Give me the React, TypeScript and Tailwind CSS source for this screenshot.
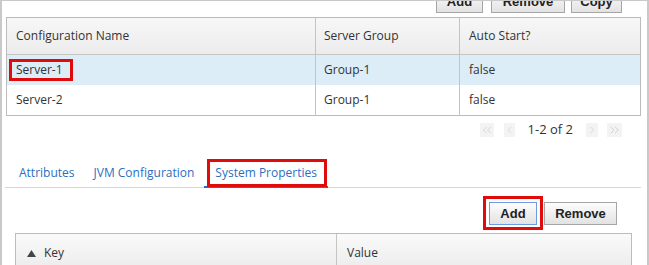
import { ChevronLeft, ChevronRight, ChevronsLeft, ChevronsRight } from "lucide-react"

const Btn = ({ label, focused, className }: { label: string; focused?: boolean; className?: string }) => {
    return (
        <div
            className={`h-[23px] flex items-center justify-center border bg-gradient-to-b from-[#fdfdfd] to-[#e2e2e2] font-['Liberation_Sans',Arial,sans-serif] font-bold text-[13px] text-[#222] ${focused ? "border-[#6d9ce4]" : "border-[#a6a6a6]"} ${className ?? ""}`}
        >
            {label}
        </div>
    )
}

const PageBox = ({ children, className }: { children: React.ReactNode; className?: string }) => {
    return (
        <div className={`h-[14px] flex items-center justify-center bg-[#f3f3f3] text-[#bdbdbd] ${className ?? ""}`}>
            {children}
        </div>
    )
}

const rows = [
    { name: "Server-1", group: "Group-1", auto: "false", selected: true },
    { name: "Server-2", group: "Group-1", auto: "false", selected: false },
]

const App = () => {
    return (
        <div className="w-[649px] h-[265px] overflow-hidden bg-white border-t border-x-2 border-[#c9c9c9] pl-1 pr-[6px] font-['Open_Sans',sans-serif] text-[12px] text-[#333]">
            {/* top actions, mostly scrolled out of view */}
            <div className="flex justify-end mt-[-11px] pr-[19px]">
                <Btn label="Add" className="w-[47px]" />
                <Btn label="Remove" className="w-[74px] ml-[8px]" />
                <Btn label="Copy" className="w-[51px] ml-[6px]" />
            </div>

            {/* configurations table */}
            <div className="mt-[4px] border border-[#bcbcbc]">
                <div className="grid grid-cols-[308px_144px_1fr] h-[37px] border-b border-[#c4c4c4] bg-gradient-to-b from-[#f7f7f7] to-[#ececec]">
                    <div className="flex items-center pl-[9px]">Configuration Name</div>
                    <div className="flex items-center pl-[8px] border-l border-[#c4c4c4]">Server Group</div>
                    <div className="flex items-center pl-[9px] border-l border-[#c4c4c4]">Auto Start?</div>
                </div>
                {rows.map((r) => (
                    <div key={r.name} className={`grid grid-cols-[308px_144px_1fr] h-[30px] ${r.selected ? "bg-[#dcedf8]" : "bg-white"}`}>
                        <div className="relative flex items-center pl-[9px]">
                            {r.name}
                            {r.selected && <div className="absolute left-[2px] top-[4px] w-[64px] h-[22px] border-[3px] border-[#e00b0b]" />}
                        </div>
                        <div className="flex items-center pl-[8px] border-l border-[#c4c4c4]">{r.group}</div>
                        <div className="flex items-center pl-[9px] border-l border-[#c4c4c4]">{r.auto}</div>
                    </div>
                ))}
            </div>

            {/* pager */}
            <div className="flex justify-end items-center h-[28px] pr-[19px] text-[13px]">
                <PageBox className="w-[14px]">
                    <ChevronsLeft size={16} strokeWidth={1} />
                </PageBox>
                <PageBox className="w-[11px] ml-[10px]">
                    <ChevronLeft size={16} strokeWidth={1} />
                </PageBox>
                <span className="ml-[13px] text-[#333]">1-2 of 2</span>
                <PageBox className="w-[12px] ml-[13px]">
                    <ChevronRight size={16} strokeWidth={1} />
                </PageBox>
                <PageBox className="w-[15px] ml-[9px]">
                    <ChevronsRight size={16} strokeWidth={1} />
                </PageBox>
            </div>

            {/* tabs */}
            <div className="flex items-end gap-[1px] mt-[14px] -ml-px pl-[5px] h-[30px] border-b border-[#d6d6d6] text-[#2a6fc2]">
                <div className="h-[29px] flex items-center px-[9px]">Attributes</div>
                <div className="h-[29px] flex items-center px-[9px]">JVM Configuration</div>
                <div className="relative h-[29px] flex items-center px-[11px] border-b-2 border-[#2a6fc2] -mb-px">
                    System Properties
                    <div className="absolute left-[3px] right-[1px] top-0 bottom-[-1px] border-[3px] border-[#e00b0b]" />
                </div>
            </div>

            {/* property actions */}
            <div className="flex justify-end mt-[14px] pr-[24px]">
                <div className="relative">
                    <Btn label="Add" focused className="w-[48px]" />
                    <div className="absolute -inset-[6px] bottom-[-5px] border-[3px] border-[#e00b0b]" />
                </div>
                <Btn label="Remove" className="w-[73px] ml-[7px]" />
            </div>

            {/* properties table */}
            <div className="mt-[8px] mx-[9px] border border-[#bcbcbc]">
                <div className="grid grid-cols-[320px_1fr] h-[38px] bg-gradient-to-b from-[#fafafa] to-[#ebebeb]">
                    <div className="flex items-center pl-[11px] gap-[8px]">
                        <svg width="9" height="7" viewBox="0 0 9 7">
                            <polygon points="4.5,0 9,7 0,7" fill="#3f4650" />
                        </svg>
                        Key
                    </div>
                    <div className="flex items-center pl-[10px] border-l border-[#c4c4c4]">Value</div>
                </div>
            </div>
        </div>
    )
}

export default App
